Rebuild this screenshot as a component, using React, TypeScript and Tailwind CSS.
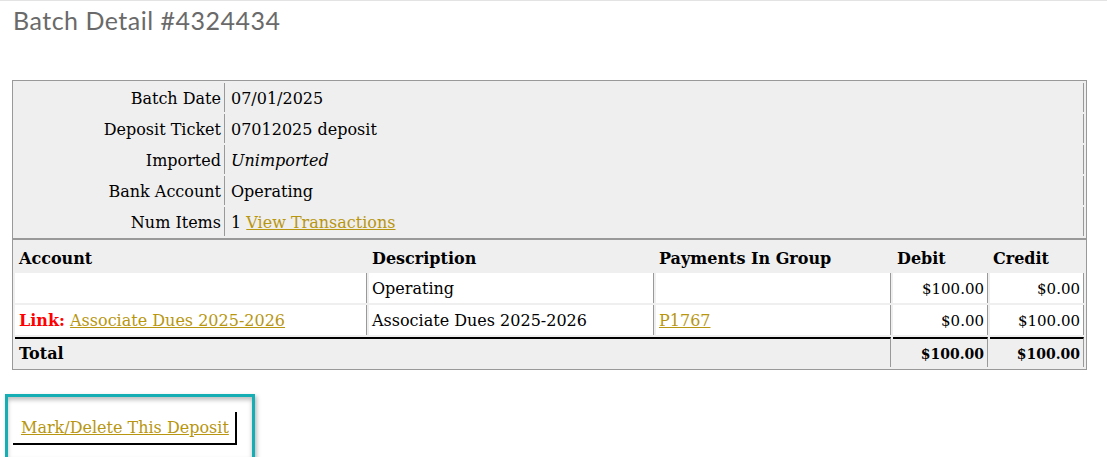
const details = [
  { label: "Batch Date", value: "07/01/2025" },
  { label: "Deposit Ticket", value: "07012025 deposit" },
  { label: "Imported", value: "Unimported", italic: true },
  { label: "Bank Account", value: "Operating" },
];

export default function App() {
  return (
    <div className="min-h-screen bg-white border-t border-[#e3e3e3] font-['DejaVu_Serif',serif] text-[16px] text-black">
      {/* Title */}
      <h1 className="pl-[13px] pt-[2px] font-['Lato',sans-serif] font-normal text-[25px] leading-[34px] tracking-[0.5px] text-[#6a6a6a]">
        Batch Detail #4324434
      </h1>

      <div className="mt-[43px] ml-[12px] w-[1075px] border border-[#999] bg-[#efefef]">
        {/* Batch info */}
        <table className="w-full table-fixed border-separate border-spacing-[2px]">
          <tbody>
            {details.map((d) => (
              <tr key={d.label}>
                <td className="w-[210px] h-[29px] p-0 pr-[3px] pt-[2px] text-right border-r border-[#999]">{d.label}</td>
                <td className={`h-[29px] p-0 pl-[4px] pt-[2px] border-r border-[#999] ${d.italic ? "italic" : ""}`}>{d.value}</td>
              </tr>
            ))}
            <tr>
              <td className="w-[210px] h-[29px] p-0 pr-[3px] pt-[2px] text-right border-r border-[#999]">Num Items</td>
              <td className="h-[29px] p-0 pl-[4px] pt-[2px] border-r border-[#999]">
                1{" "}
                <a href="#" className="text-[#b8960f] underline">View Transactions</a>
              </td>
            </tr>
          </tbody>
        </table>

        <div className="h-[2px] bg-[#999]" />

        {/* Entries */}
        <table className="w-full table-fixed border-separate border-spacing-[2px]">
          <thead>
            <tr className="font-bold text-left">
              <th className="w-[352px] h-[29px] p-0 pl-[4px] pt-[4px]">Account</th>
              <th className="w-[285px] h-[29px] p-0 pl-[3px] pt-[4px]">Description</th>
              <th className="w-[235px] h-[29px] p-0 pl-[3px] pt-[4px]">Payments In Group</th>
              <th className="w-[95px] h-[29px] p-0 pl-[4px] pt-[4px]">Debit</th>
              <th className="w-[94px] h-[29px] p-0 pl-[3px] pt-[4px]">Credit</th>
            </tr>
          </thead>
          <tbody>
            <tr>
              <td className="h-[30px] p-0 pl-[4px] pt-[2px] bg-white border-r border-[#999]"></td>
              <td className="h-[30px] p-0 pl-[3px] pt-[2px] bg-white border-r border-[#999]">Operating</td>
              <td className="h-[30px] p-0 pl-[3px] pt-[2px] bg-white border-r border-[#999]"></td>
              <td className="h-[30px] p-0 pr-[3px] pt-[2px] text-right text-[15px] bg-white border-r border-[#999]">$100.00</td>
              <td className="h-[30px] p-0 pr-[3px] pt-[2px] text-right text-[15px] bg-white border-r border-[#999]">$0.00</td>
            </tr>
            <tr>
              <td className="h-[30px] p-0 pl-[4px] pt-[2px] bg-white border-r border-[#999]">
                <span className="font-bold text-[#ff0000]">Link:</span>{" "}
                <a href="#" className="text-[#b8960f] underline">Associate Dues 2025-2026</a>
              </td>
              <td className="h-[30px] p-0 pl-[3px] pt-[2px] bg-white border-r border-[#999]">Associate Dues 2025-2026</td>
              <td className="h-[30px] p-0 pl-[3px] pt-[2px] bg-white border-r border-[#999]">
                <a href="#" className="text-[#b8960f] underline">P1767</a>
              </td>
              <td className="h-[30px] p-0 pr-[3px] pt-[2px] text-right text-[15px] bg-white border-r border-[#999]">$0.00</td>
              <td className="h-[30px] p-0 pr-[3px] pt-[2px] text-right text-[15px] bg-white border-r border-[#999]">$100.00</td>
            </tr>
            <tr className="font-bold">
              <td colSpan={3} className="h-[30px] p-0 pl-[4px] pt-[2px] border-t-2 border-t-black border-r border-r-[#999]">Total</td>
              <td className="h-[30px] p-0 pr-[3px] pt-[2px] text-right text-[14px] border-t-2 border-t-black border-r border-r-[#999]">$100.00</td>
              <td className="h-[30px] p-0 pr-[3px] pt-[2px] text-right text-[14px] border-t-2 border-t-black border-r border-r-[#999]">$100.00</td>
            </tr>
          </tbody>
        </table>
      </div>

      {/* Action */}
      <div className="mt-[24px] ml-[5px] w-[250px] border-[3px] border-[#16aeb5] pl-[5px] pt-[15px] pb-[12px] shadow-[inset_0_3px_4px_rgba(0,0,0,0.25),2px_2px_4px_rgba(0,0,0,0.25)]">
        <a href="#" className="inline-block border-r-2 border-b-2 border-black pl-[8px] pr-[6px] pt-[4px] pb-[3px] text-[#b8960f] underline">
          Mark/Delete This Deposit
        </a>
      </div>
    </div>
  );
}
